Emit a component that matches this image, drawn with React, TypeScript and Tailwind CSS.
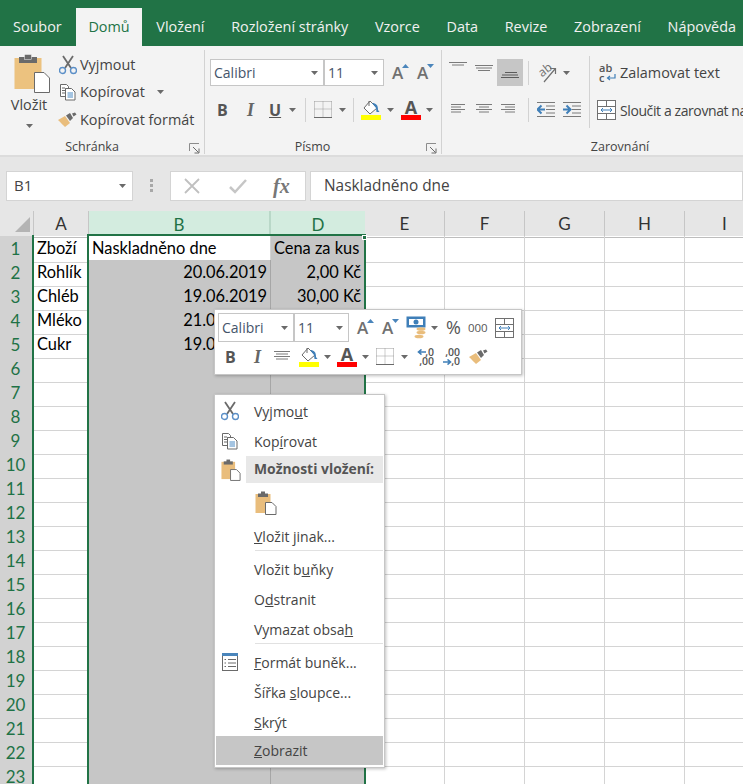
import React from 'react';

const ui = "font-['Open_Sans','Liberation_Sans',sans-serif]";
const cellFont = "font-['Lato','Liberation_Sans',sans-serif] text-[16.400px]";

const Caret = ({ className = '' }: { className?: string }) => (
  <svg viewBox="0 0 7 4" className={`w-[7px] h-[4px] shrink-0 ${className}`}><path d="M0 0h7L3.5 4z" fill="#6a6a6a" /></svg>
);

const Scissors = ({ className = 'w-[18px] h-[20px]' }: { className?: string }) => (
  <svg viewBox="0 0 18 20" className={className} fill="none">
    <path d="M4 1l8 12M14 1L6 13" stroke="#6a6a6a" strokeWidth="1.8" />
    <circle cx="3.5" cy="15.5" r="3" stroke="#5b8fc7" strokeWidth="1.4" />
    <circle cx="14.5" cy="15.5" r="3" stroke="#5b8fc7" strokeWidth="1.4" />
  </svg>
);

const Copy = ({ className = 'w-[18px] h-[18px]' }: { className?: string }) => (
  <svg viewBox="0 0 18 18" className={className} fill="none">
    <path d="M1.5 1.5h6l2 2v2h-3v8h-5z" fill="#fff" stroke="#6a6a6a" />
    <path d="M3 5h3M3 7.5h3M3 10h3" stroke="#6a6a6a" />
    <path d="M6.5 5.5h6l3.5 3.5v8H6.500z" fill="#fff" stroke="#6a6a6a" />
    <path d="M8.500 10h5.500M8.500 12h5.500M8.500 14h5.500" stroke="#4a8ac4" />
  </svg>
);

const Brush = ({ className = 'w-[19px] h-[16px]' }: { className?: string }) => (
  <svg viewBox="0 0 19 16" className={className}>
    <path d="M0 8l7-4 5 7-5 4c-2-2-4-4-7-7z" fill="#e9bd7c" />
    <path d="M8 3.500l4-2.500 3 5-3 3z" fill="#6a6a6a" />
    <path d="M14 1.500l3-1 1.500 2-3 2z" fill="#6a6a6a" />
  </svg>
);

const PasteSmall = ({ className = 'w-[22px] h-[24px]' }: { className?: string }) => (
  <svg viewBox="0 0 22 24" className={className}>
    <rect x="0.500" y="3" width="15" height="19" fill="#e9bd7c" />
    <rect x="3" y="2.500" width="10" height="3.500" fill="#6a6a6a" />
    <rect x="6" y="0.500" width="4" height="3" fill="#6a6a6a" />
    <path d="M10.500 11.500h6.500l4 4v8h-10.500z" fill="#fff" stroke="#6a6a6a" />
  </svg>
);

const PasteLarge = () => (
  <svg viewBox="0 0 36 39" className="w-[36px] h-[39px]">
    <rect x="0.500" y="4" width="27" height="31" fill="#ecc27f" />
    <rect x="5" y="3" width="18" height="6" fill="#6a6a6a" />
    <rect x="10.500" y="0.500" width="7" height="5" fill="#6a6a6a" stroke="#f3f3f3" strokeWidth="0.500" />
    <path d="M20.500 18.500h9.500l5.500 5.500v14.500h-15z" fill="#fff" stroke="#6a6a6a" />
  </svg>
);

const Launcher = () => (
  <svg viewBox="0 0 11 11" className="w-[11px] h-[11px]" fill="none">
    <path d="M0.500 8V0.500H10" stroke="#8c8c8c" />
    <path d="M4 4l5.500 5.500M5.500 10h4.500V5.500" stroke="#6a6a6a" />
  </svg>
);

const GrowFont = ({ down = false }: { down?: boolean }) => (
  <div className={`relative w-[16px] h-[20px] flex items-end ${ui} font-semibold text-[17px] leading-[20px] text-[#707070]`}>
    <span>A</span>
    <svg viewBox="0 0 7 4" className="absolute right-[-1px] top-[1px] w-[7px] h-[4px]">
      <path d={down ? 'M0 0h7L3.500 4z' : 'M0 4h7L3.500 0z'} fill="#4a85bb" />
    </svg>
  </div>
);

const Borders = ({ className = 'w-[18px] h-[18px]' }: { className?: string }) => (
  <svg viewBox="0 0 18 18" className={className} fill="none">
    <path d="M0.500 0.500h17M0.500 0.500v15M17.500 0.500v15M0.500 8h17M9 0.500v15" stroke="#9a9a9a" strokeDasharray="1 1" />
    <path d="M0 16.500h18" stroke="#6a6a6a" />
  </svg>
);

const Fill = () => (
  <div className="flex flex-col items-center w-[20px]">
    <svg viewBox="0 0 20 15" className="w-[20px] h-[15px]" fill="none">
      <path d="M9 1L3 8l6 6 7-6z" fill="#fff" stroke="#6a6a6a" />
      <path d="M8 1v5" stroke="#6a6a6a" />
      <path d="M11 3c4 0 6 2 6 7l1.500 2-3 0-.5-4z" fill="#3f7fb8" />
    </svg>
    <div className="h-[5px] w-[20px] bg-[#ffff00]" />
  </div>
);

const FontColor = () => (
  <div className="flex flex-col items-center w-[20px]">
    <div className={`h-[15px] ${ui} font-bold text-[18px] leading-[15px] text-[#555]`}>A</div>
    <div className="h-[5px] w-[20px] bg-[#ff0000]" />
  </div>
);

const Lines = ({ rows, active = false }: { rows: [number, number][]; active?: boolean }) => (
  <svg viewBox="0 0 18 14" className="w-[18px] h-[14px]" fill="none">
    {rows.map(([x, w], i) => (
      <path key={i} d={`M${x} ${i * 2.500 + 1.500}h${w}`} stroke={active ? '#5a5a5a' : '#7a7a7a'} />
    ))}
  </svg>
);

const Indent = ({ flip = false }: { flip?: boolean }) => (
  <svg viewBox="0 0 18 16" className="w-[18px] h-[16px]" fill="none">
    <path d="M0 0.500h18M9 4h9M9 7.500h9M9 11h9M0 14.500h18" stroke="#7a7a7a" />
    <path d={flip ? 'M0 7.500h6M3.500 3.500l4 4-4 4' : 'M8 7.500H2M4.500 3.500l-4 4 4 4'} stroke="#3f7fb8" strokeWidth="2" />
  </svg>
);

const Orient = () => (
  <div className={`relative w-[20px] h-[20px] ${ui} text-[12px] text-[#707070]`}>
    <span className="absolute left-[1px] top-0 -rotate-[38deg] leading-[14px]">ab</span>
    <svg viewBox="0 0 20 20" className="absolute inset-0 w-[20px] h-[20px]" fill="none">
      <path d="M7 19L18 6M13 5.500h5.500v5.500" stroke="#707070" strokeWidth="1.200" />
    </svg>
  </div>
);

const Merge = ({ className = 'w-[19px] h-[20px]' }: { className?: string }) => (
  <svg viewBox="0 0 19 20" className={className} fill="none">
    <rect x="0.500" y="0.500" width="18" height="19" fill="#fff" stroke="#707070" />
    <path d="M0 6.500h19M0 13.500h19M9.500 0v6.500M9.500 13.500V20" stroke="#707070" />
    <path d="M4 10h11M6 8l-2 2 2 2M13 8l2 2-2 2" stroke="#3f7fb8" />
  </svg>
);

const Wrap = () => (
  <div className="relative w-[17px] h-[20px] font-['Open_Sans',sans-serif] font-semibold text-[11px] leading-[10px] text-[#555]">
    <div>ab</div>
    <div>c</div>
    <svg viewBox="0 0 10 8" className="absolute left-[7px] top-[11px] w-[10px] h-[8px]" fill="none">
      <path d="M9 0v4H2M4 2L1.500 4 4 6" stroke="#3f7fb8" strokeWidth="1.200" />
    </svg>
  </div>
);

const Accounting = () => (
  <svg viewBox="0 0 20 23" className="w-[20px] h-[23px]" fill="none">
    <rect x="0.500" y="0.500" width="19" height="11" fill="#3f7fb8" />
    <rect x="3" y="3" width="14" height="6" fill="#fff" />
    <circle cx="10" cy="6" r="2.500" fill="#3f7fb8" />
    <ellipse cx="15" cy="13" rx="4.500" ry="1.800" fill="#e9bd7c" />
    <ellipse cx="15" cy="16.500" rx="4.500" ry="1.800" fill="#e9bd7c" />
    <ellipse cx="13" cy="20.500" rx="4.500" ry="1.800" fill="#e9bd7c" />
  </svg>
);

const Decimal = ({ more = false }: { more?: boolean }) => (
  <div className="relative w-[17px] h-[18px] font-['Open_Sans',sans-serif] font-semibold text-[10.500px] text-[#555] leading-[9px]">
    <div className="absolute right-0 top-0">{more ? ',00' : ',0'}</div>
    <div className="absolute right-0 top-[9px]">{more ? ',0' : ',00'}</div>
    <svg viewBox="0 0 9 6" className={`absolute w-[9px] h-[6px] ${more ? 'left-0 top-[11px]' : 'left-0 top-[1px]'}`} fill="none">
      <path d={more ? 'M0 3h7M4.500 0.500L7.500 3l-3 2.500' : 'M9 3H2M4.500 0.500L1.500 3l3 2.500'} stroke="#3f7fb8" strokeWidth="1.600" />
    </svg>
  </div>
);

const VSep = ({ className = '' }: { className?: string }) => <div className={`w-px bg-[#d2d2d2] ${className}`} />;

const Combo = ({ label, className, compact = false }: { label: string; className: string; compact?: boolean }) => (
  <div className={`flex items-center justify-between bg-white border border-[#c6c6c6] ${compact ? 'h-[29px]' : 'h-[27px]'} pl-[3px] pr-[5px] ${className}`}>
    <span className={`${ui} text-[14px] text-[#44546a]`}>{label}</span>
    <Caret />
  </div>
);

const ClipItem = ({ icon, label, caret = false }: { icon: React.ReactNode; label: string; caret?: boolean }) => (
  <div className="flex items-center h-[27.500px]">
    <div className="w-[19px] flex justify-center mr-[3px]">{icon}</div>
    <span className={`${ui} text-[14.400px] text-[#444] whitespace-nowrap`}>{label}</span>
    {caret && <Caret className="ml-[12px]" />}
  </div>
);

const GroupLabel = ({ label, launcher = false, textClass = '' }: { label: string; launcher?: boolean; textClass?: string }) => (
  <div className={`relative h-[16px] shrink-0 flex justify-center items-center ${textClass}`}>
    <span className={`${ui} text-[12.500px] text-[#444]`}>{label}</span>
    {launcher && <div className="absolute right-[4px] top-[4px]"><Launcher /></div>}
  </div>
);

const Ribbon = () => (
  <div className="flex h-[111px] bg-[#f3f3f3] border-b-2 border-[#dcdcdc] overflow-hidden">
    {/* Schránka */}
    <div className="w-[204px] shrink-0 flex flex-col pt-[4px] h-[109px]">
      <div className="flex flex-1">
        <div className="w-[58px] flex flex-col items-center pt-[4px]">
          <div className="pl-[5px]"><PasteLarge /></div>
          <span className={`${ui} text-[14.400px] text-[#444] mt-[1px]`}>Vložit</span>
          <Caret className="mt-[8px]" />
        </div>
        <div className="flex flex-col pt-px">
          <ClipItem icon={<Scissors />} label="Vyjmout" />
          <ClipItem icon={<Copy />} label="Kopírovat" caret />
          <ClipItem icon={<Brush />} label="Kopírovat formát" />
        </div>
      </div>
      <GroupLabel label="Schránka" launcher textClass="pr-[20px]" />
    </div>
    <VSep className="h-[104px] mt-[4px] shrink-0" />
    {/* Písmo */}
    <div className="w-[236px] shrink-0 flex flex-col pt-[13px] pl-[5px] h-[109px]">
      <div className="flex items-center h-[27px]">
        <Combo label="Calibri" className="w-[114px]" />
        <Combo label="11" className="w-[60px]" />
        <div className="ml-[8px]"><GrowFont /></div>
        <div className="ml-[9px]"><GrowFont down /></div>
      </div>
      <div className="flex items-center h-[24px] mt-[12px]">
        <span className="font-['Open_Sans',sans-serif] font-bold text-[16px] text-[#555] ml-[7px] w-[29px]">B</span>
        <span className="font-['Liberation_Serif',serif] font-bold italic text-[18px] text-[#666] w-[23px] pl-[1px]">I</span>
        <span className="font-['Open_Sans',sans-serif] font-bold text-[16px] text-[#555] underline w-[20px]">U</span>
        <Caret />
        <VSep className="h-[24px] ml-[9px]" />
        <div className="ml-[8px]"><Borders /></div>
        <Caret className="ml-[7px]" />
        <VSep className="h-[24px] ml-[7px]" />
        <div className="ml-[7px]"><Fill /></div>
        <Caret className="ml-[6px]" />
        <div className="ml-[7px]"><FontColor /></div>
        <Caret className="ml-[5px]" />
      </div>
      <div className="flex-1" />
      <GroupLabel label="Písmo" launcher textClass="pr-[26px]" />
    </div>
    <VSep className="h-[104px] mt-[4px] shrink-0" />
    {/* Zarovnání */}
    <div className="flex-1 flex flex-col pt-[6px] h-[109px] min-w-0">
      <div className="flex flex-1">
        <div className="w-[86px] shrink-0 pl-[7px] flex flex-col">
          <div className="flex items-start h-[27px] mt-[7px]">
            <div className="mt-[2px]"><Lines rows={[[0, 18], [3, 12]]} /></div>
            <div className="ml-[8px] mt-[5px]"><Lines rows={[[0, 18], [1, 16], [3, 12]]} /></div>
            <div className="ml-[4px] w-[26px] h-[27px] bg-[#c6c6c6] flex justify-center items-end pb-[1px]"><Lines rows={[[4, 12], [1, 16], [0, 18]]} active /></div>
          </div>
          <div className="flex items-center h-[16px] mt-[16px] pl-[2px]">
            <Lines rows={[[0, 14], [0, 10], [0, 14], [0, 10]]} />
            <div className="ml-[7px]"><Lines rows={[[0, 16], [3, 10], [0, 16], [3, 10]]} /></div>
            <div className="ml-[7px]"><Lines rows={[[0, 14], [4, 10], [0, 14], [4, 10]]} /></div>
          </div>
        </div>
        <div className="w-[61px] shrink-0 flex flex-col">
          <div className="flex items-center h-[27px] mt-[7px]">
            <VSep className="h-[24px]" />
            <div className="ml-[8px]"><Orient /></div>
            <Caret className="ml-[6px]" />
          </div>
          <div className="flex items-center h-[24px] mt-[12px]">
            <VSep className="h-[24px]" />
            <div className="ml-[8px]"><Indent /></div>
            <div className="ml-[8px]"><Indent flip /></div>
          </div>
        </div>
        <VSep className="h-[72px] mt-[4px] shrink-0" />
        <div className="flex flex-col pl-[7px] whitespace-nowrap">
          <div className="flex items-center h-[27px] mt-[7px] ml-[2px]">
            <Wrap />
            <span className={`${ui} text-[14.400px] text-[#444] ml-[4px]`}>Zalamovat text</span>
          </div>
          <div className="flex items-center h-[24px] mt-[12px]">
            <Merge />
            <span className={`${ui} text-[14px] tracking-[-0.4px] text-[#444] ml-[4px]`}>Sloučit a zarovnat na střed</span>
          </div>
        </div>
      </div>
      <div className="w-[356px]"><GroupLabel label="Zarovnání" /></div>
    </div>
  </div>
);

const FormulaBar = () => (
  <div className="flex items-center h-[54px] bg-[#e6e6e6] pl-[6px] pt-[3px]">
    <div className="w-[127px] h-[30px] bg-white border border-[#d4d4d4] flex items-center justify-between pl-[7px] pr-[6px]">
      <span className={`${ui} text-[15px] text-[#444]`}>B1</span>
      <Caret />
    </div>
    <div className="w-[37px] flex justify-center">
      <div className="w-[3px] h-[14px] bg-[repeating-linear-gradient(#a8a8a8_0_3px,transparent_3px_5px)]" />
    </div>
    <div className="w-[136px] h-[30px] bg-white border border-[#d4d4d4] flex items-center pl-[13px]">
      <svg viewBox="0 0 16 16" className="w-[16px] h-[16px]" fill="none"><path d="M1 1l14 14M15 1L1 15" stroke="#c0c0c0" strokeWidth="1.800" /></svg>
      <svg viewBox="0 0 18 16" className="w-[18px] h-[16px] ml-[29px]" fill="none"><path d="M1 9l5 5L17 2" stroke="#c6c6c6" strokeWidth="2.500" /></svg>
      <span className="font-['Liberation_Serif',serif] italic font-bold text-[20px] text-[#777] ml-[26px]">fx</span>
    </div>
    <div className="ml-[4px] flex-1 h-[30px] bg-white border border-[#d4d4d4] flex items-center pl-[13px]">
      <span className={`${ui} text-[15.400px] text-[#444]`}>Naskladněno dne</span>
    </div>
  </div>
);

const rowData: Record<number, [string, string, string]> = {
  1: ['Zboží', 'Naskladněno dne', 'Cena za kus'],
  2: ['Rohlík', '20.06.2019', '2,00 Kč'],
  3: ['Chléb', '19.06.2019', '30,00 Kč'],
  4: ['Mléko', '21.06.2019', '15,00 Kč'],
  5: ['Cukr', '19.06.2019', '20,00 Kč'],
};

const rows = Array.from({ length: 23 }, (_, i) => i + 1);
const columns = 'grid grid-cols-[34px_55px_182px_94px_80px_80px_80px_80px_80px]';

const Sheet = () => (
  <div className="bg-white">
    <div className={`${columns} h-[25px] bg-[#e6e6e6] ${cellFont}`}>
      <div className="relative border-r border-[#c6c6c6]">
        <svg viewBox="0 0 15 15" className="absolute left-[15px] top-[6px] w-[15px] h-[15px]"><path d="M15 0v15H0z" fill="#b4b4b4" /></svg>
      </div>
      <div className="flex items-center justify-center text-[17px] text-[#333] border-r border-[#c6c6c6] border-b border-b-[#bdbdbd]">A</div>
      <div className="flex items-center justify-center text-[17px] text-[#1f7246] bg-[#d3ecdf] border-r-2 border-[#b9d8c8]">B</div>
      <div className="flex items-center justify-center text-[17px] text-[#1f7246] bg-[#d3ecdf]">D</div>
      {['E', 'F', 'G', 'H', 'I'].map((c) => (
        <div key={c} className="flex items-center justify-center text-[17px] text-[#333] border-r border-[#c6c6c6] border-b border-b-[#bdbdbd]">{c}</div>
      ))}
    </div>
    {rows.map((r) => {
      const data = rowData[r];
      return (
        <div key={r} className={`${columns} h-[24px] ${cellFont} text-black`}>
          <div className="flex items-center justify-center text-[17px] text-[#1f7246] bg-[#d2d2d2] border-r border-b border-[#b4b4b4] pr-[2px]">{r}</div>
          <div className="flex items-center pl-[3px] pr-[2px] border-r border-b border-[#d4d4d4] whitespace-nowrap overflow-hidden">{data?.[0]}</div>
          <div className={`flex items-center pl-[3px] pr-[3px] border-r border-b whitespace-nowrap overflow-hidden ${r === 1 ? 'bg-white border-[#d4d4d4]' : 'bg-[#c6c6c6] border-[#a6a6a6] justify-end'}`}>{data?.[1]}</div>
          <div className={`flex items-center bg-[#c6c6c6] pl-[3px] pr-[3px] border-r border-b border-[#a6a6a6] whitespace-nowrap overflow-hidden ${r === 1 ? '' : 'justify-end'}`}>{data?.[2]}</div>
          {[0, 1, 2, 3, 4].map((c) => (
            <div key={c} className="border-r border-b border-[#d4d4d4]" />
          ))}
        </div>
      );
    })}
  </div>
);

const MiniToolbar = () => (
  <div className="absolute left-[214px] top-[309px] w-[308px] h-[66px] bg-white border border-[#c6c6c6] shadow-[1px_1px_3px_rgba(0,0,0,0.25)] pl-[3px] pt-[3px]">
    <div className="flex items-center h-[29px]">
      <Combo label="Calibri" className="w-[76px]" compact />
      <Combo label="11" className="w-[55px]" compact />
      <div className="ml-[8px]"><GrowFont /></div>
      <div className="ml-[9px]"><GrowFont down /></div>
      <div className="ml-[8px]"><Accounting /></div>
      <Caret className="ml-[5px]" />
      <span className={`${ui} text-[18px] text-[#555] ml-[8px]`}>%</span>
      <span className={`${ui} text-[11.500px] text-[#555] ml-[7px]`}>000</span>
      <div className="ml-[7px]"><Merge className="w-[19px] h-[20px]" /></div>
    </div>
    <div className="flex items-center h-[26px] mt-[2px] pl-[7px]">
      <span className="font-['Open_Sans',sans-serif] font-bold text-[16px] text-[#555] w-[29px]">B</span>
      <span className="font-['Liberation_Serif',serif] font-bold italic text-[18px] text-[#666] w-[20px]">I</span>
      <Lines rows={[[0, 16], [2, 12], [0, 16], [2, 12]]} />
      <div className="ml-[7px]"><Fill /></div>
      <Caret className="ml-[5px]" />
      <div className="ml-[6px]"><FontColor /></div>
      <Caret className="ml-[5px]" />
      <div className="ml-[7px]"><Borders /></div>
      <Caret className="ml-[7px]" />
      <div className="ml-[9px]"><Decimal /></div>
      <div className="ml-[9px]"><Decimal more /></div>
      <div className="ml-[9px]"><Brush /></div>
    </div>
  </div>
);

const MenuItem = ({ children, icon, className = 'h-[30px]' }: { children: React.ReactNode; icon?: React.ReactNode; className?: string }) => (
  <div className={`flex items-center ${className}`}>
    <div className="w-[28px] flex justify-center mr-[10px]">{icon}</div>
    <span className={`${ui} text-[14px] text-[#444] whitespace-nowrap`}>{children}</span>
  </div>
);

const MenuSep = () => <div className="relative h-px bg-[#e1e1e1] ml-[39px] -mt-px mb-[3px]" />;

const ContextMenu = () => (
  <div className="absolute left-[214px] top-[394px] w-[171px] h-[374px] bg-white border border-[#c6c6c6] shadow-[1px_1px_3px_rgba(0,0,0,0.25)] p-px">
    <MenuItem icon={<Scissors />}>Vyjmo<u>u</u>t</MenuItem>
    <MenuItem icon={<Copy />}>Kop<u>í</u>rovat</MenuItem>
    <div className="flex h-[27px]">
      <div className="w-[30px] flex justify-center"><PasteSmall className="w-[20px] h-[22px] mt-[3px]" /></div>
      <div className={`flex-1 bg-[#e8e8e8] flex items-center pl-[8px] ${ui} font-bold text-[13.900px] text-[#555] whitespace-nowrap overflow-hidden`}>Možnosti vložení:</div>
    </div>
    <div className="h-[38px] pl-[39px] pt-[8px]"><PasteSmall /></div>
    <MenuItem><u>V</u>ložit jinak...</MenuItem>
    <MenuSep />
    <MenuItem>Vložit b<u>u</u>ňky</MenuItem>
    <MenuItem>O<u>d</u>stranit</MenuItem>
    <MenuItem>Vymazat obsa<u>h</u></MenuItem>
    <MenuSep />
    <MenuItem icon={
      <svg viewBox="0 0 16 18" className="w-[16px] h-[18px]" fill="none">
        <rect x="0.500" y="0.500" width="15" height="17" fill="#fff" stroke="#6a6a6a" />
        <rect x="0" y="0" width="16" height="3" fill="#4a85bb" />
        <path d="M6 6.500h8M6 10h8M6 13.500h8" stroke="#6a6a6a" />
        <path d="M2.500 6.500h1.500M2.500 10h1.500M2.500 13.500h1.500" stroke="#6a6a6a" />
      </svg>
    }><u>F</u>ormát buněk...</MenuItem>
    <MenuItem>Šířka <u>s</u>loupce...</MenuItem>
    <MenuItem><u>S</u>krýt</MenuItem>
    <MenuItem className="h-[29px] -mt-px bg-[#c6c6c6]"><u>Z</u>obrazit</MenuItem>
  </div>
);

const tabs = ['Soubor', 'Domů', 'Vložení', 'Rozložení stránky', 'Vzorce', 'Data', 'Revize', 'Zobrazení', 'Nápověda'];

export default function App() {
  return (
    <div className="relative w-[743px] h-[784px] overflow-hidden bg-white">
      <div className="flex items-end h-[46px] bg-[#217346] pt-[8px] pl-px">
        {tabs.map((t) => (
          <div key={t} className={`h-[38px] flex items-center px-[12px] mr-[2.700px] whitespace-nowrap ${ui} text-[14.400px] ${t === 'Domů' ? 'bg-[#f3f3f3] text-[#217346]' : 'text-[#f1f1f1]'}`}>{t}</div>
        ))}
      </div>
      <Ribbon />
      <FormulaBar />
      <Sheet />
      {/* selection frame */}
      <div className="absolute left-[87px] top-[234px] w-[279px] h-[560px] border-2 border-[#217346] pointer-events-none" />
      <div className="absolute left-[32px] top-[235px] w-[2px] h-[560px] bg-[#217346]" />
      <div className="absolute left-[362px] top-[235px] w-[5px] h-[5px] bg-[#217346] border border-white" />
      <MiniToolbar />
      <ContextMenu />
    </div>
  );
}
